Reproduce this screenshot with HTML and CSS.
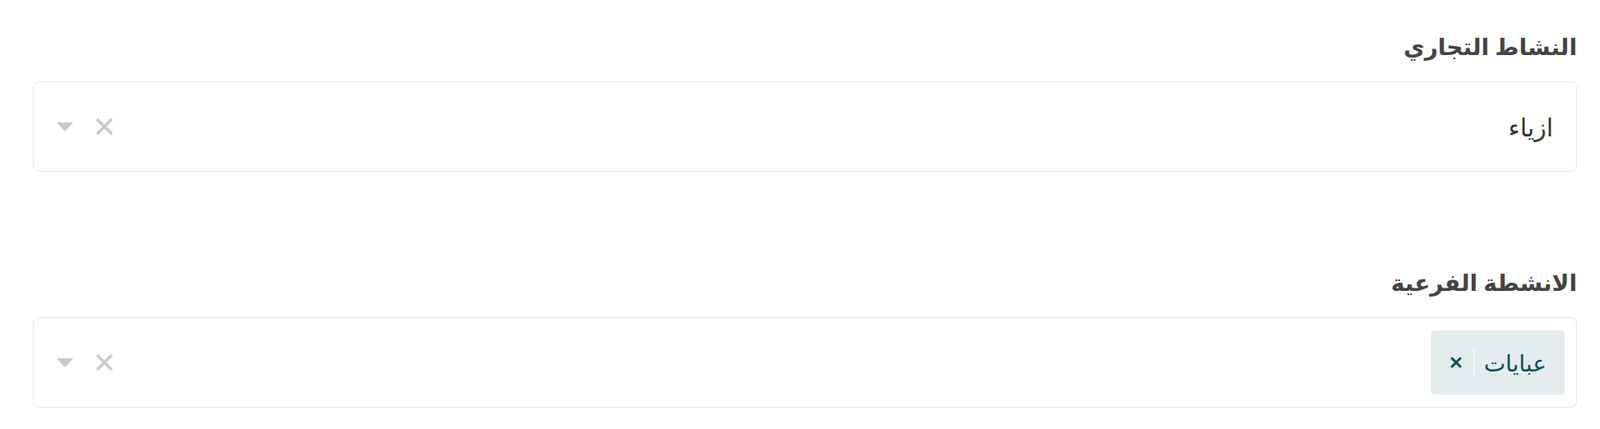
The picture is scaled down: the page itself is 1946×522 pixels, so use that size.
FILE: index.html
```html
<!DOCTYPE html>
<html lang="ar" dir="rtl">
<head>
  <meta charset="UTF-8" />
  <title>النشاط التجاري</title>
  <link rel="stylesheet" href="styles.css">
</head>
<body>

  <div class="form">
    <div class="field">
      <label class="field-label">النشاط التجاري</label>
      <div class="select">
        <div class="select-value">
          <span class="single">ازياء</span>
        </div>
        <div class="select-icons">
          <svg class="icon-clear" width="24" height="24" viewBox="0 0 24 24"><path d="M4 4 L20 20 M20 4 L4 20" stroke="#c9c9c9" stroke-width="3.6" stroke-linecap="round"/></svg>
          <svg class="icon-caret" width="22" height="12" viewBox="0 0 22 12"><path d="M1 1 L21 1 L12.5 10.5 Q11 12 9.5 10.5 Z" fill="#c9c9c9"/></svg>
        </div>
      </div>
    </div>

    <div class="field">
      <label class="field-label">الانشطة الفرعية</label>
      <div class="select">
        <div class="select-value">
          <span class="tag">
            <span class="tag-text">عبايات</span>
            <span class="tag-sep"></span>
            <svg class="tag-x" width="14" height="14" viewBox="0 0 14 14"><path d="M2 2 L12 12 M12 2 L2 12" stroke="#0c4d58" stroke-width="3" stroke-linecap="round"/></svg>
          </span>
        </div>
        <div class="select-icons">
          <svg class="icon-clear" width="24" height="24" viewBox="0 0 24 24"><path d="M4 4 L20 20 M20 4 L4 20" stroke="#c9c9c9" stroke-width="3.6" stroke-linecap="round"/></svg>
          <svg class="icon-caret" width="22" height="12" viewBox="0 0 22 12"><path d="M1 1 L21 1 L12.5 10.5 Q11 12 9.5 10.5 Z" fill="#c9c9c9"/></svg>
        </div>
      </div>
    </div>
  </div>

</body>
</html>
```

FILE: styles.css
```css
body {
  margin: 0;
  background: #fff;
  font-family: "Noto Sans", "DejaVu Sans", sans-serif;
  color: #333;
}

.form {
  padding: 36px 28px 0 40px;
}

.field + .field {
  margin-top: 114px;
}

.field-label {
  display: block;
  font-size: 28px;
  font-weight: 600;
  color: #444;
  line-height: 40px;
  margin-bottom: 23px;
}

.select {
  display: flex;
  align-items: center;
  justify-content: space-between;
  height: 108px;
  border: 1px solid #e6e6e6;
  border-radius: 8px;
  padding: 0 14px 0 27px;
}

.select-value {
  display: flex;
  align-items: center;
}

.single {
  font-size: 30px;
  color: #333;
  padding-right: 14px;
}

.select-icons {
  display: flex;
  align-items: center;
  gap: 25px;
}

.tag {
  display: flex;
  align-items: center;
  height: 78px;
  padding: 0 22px 0 24px;
  background: #e4ebec;
  border-radius: 5px;
  color: #0c4d58;
}

.tag-text {
  font-size: 28px;
}

.tag-sep {
  width: 1px;
  height: 34px;
  background: #fff;
  margin: 0 12px 0 14px;
}
```
